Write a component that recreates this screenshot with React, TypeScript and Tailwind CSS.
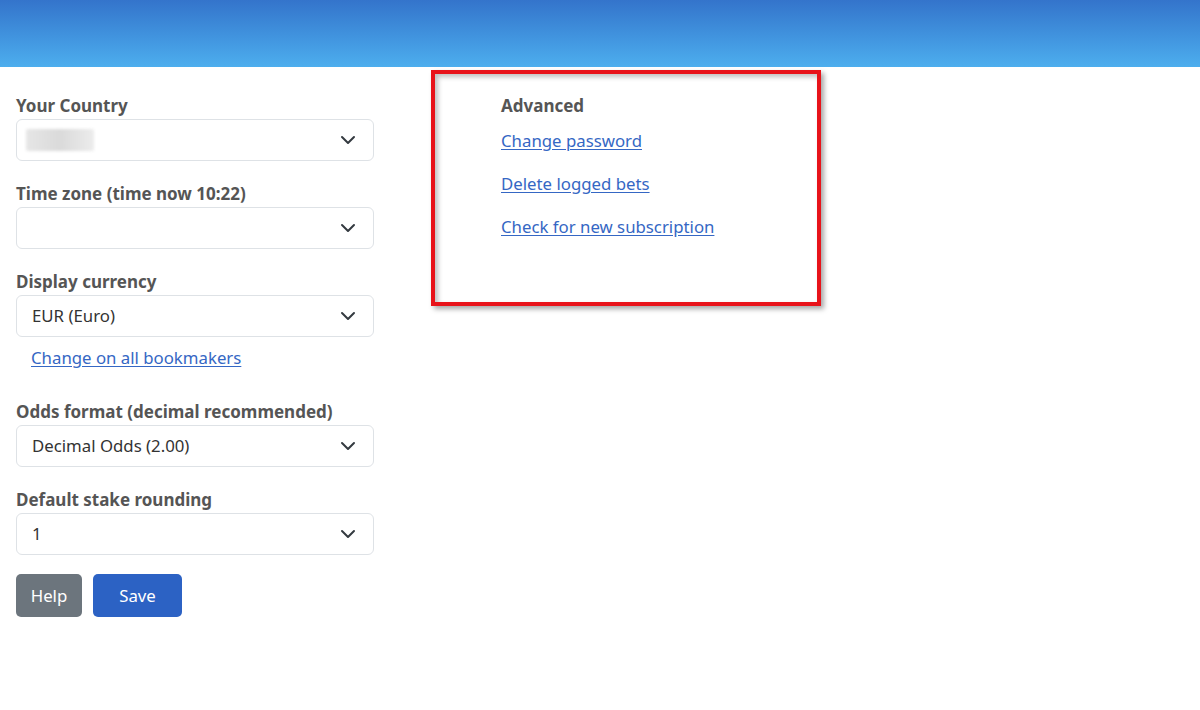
import React from "react";

function Chevron() {
  return (
    <svg width="16" height="16" viewBox="0 0 16 16" fill="none" className="shrink-0">
      <path d="M2 5l6 6 6-6" stroke="#343a40" strokeWidth="2" strokeLinecap="round" strokeLinejoin="round" />
    </svg>
  );
}

function SelectBox({ value, blurred }: { value?: string; blurred?: boolean }) {
  return (
    <div className="flex h-[42px] w-[358px] items-center justify-between rounded-[6px] border border-[#dee2e6] bg-white pl-[15px] pr-[17px] text-[16.8px] text-[#333]">
      {blurred ? (
        <div className="h-[22px] w-[68px] -ml-[6px] rounded-[2px] bg-gradient-to-r from-[#e6e6e6] via-[#dadada] to-[#ececec] blur-[1.5px]" />
      ) : (
        <span>{value}</span>
      )}
      <Chevron />
    </div>
  );
}

function Field({ label, children }: { label: string; children: React.ReactNode }) {
  return (
    <div className="flex flex-col">
      <label className="mb-[2px] text-[17px] font-bold leading-[23px] text-[#555]">{label}</label>
      {children}
    </div>
  );
}

const link = "text-[16.8px] leading-[22px] text-[#3567c4] underline underline-offset-2";

export default function App() {
  return (
    <div className="h-[710px] w-[1200px] bg-white" style={{ fontFamily: '"Noto Sans", "Open Sans", sans-serif' }}>
      <header className="h-[67px] w-full bg-gradient-to-b from-[#3474cb] to-[#4daeee]" />
      <main className="flex items-start">
        <div className="ml-[16px] mt-[27px] flex w-[358px] flex-col">
          <Field label="Your Country">
            <SelectBox blurred />
          </Field>
          <div className="mt-[21px]">
            <Field label="Time zone (time now 10:22)">
              <SelectBox />
            </Field>
          </div>
          <div className="mt-[21px]">
            <Field label="Display currency">
              <SelectBox value="EUR (Euro)" />
            </Field>
          </div>
          <a href="#" className={`ml-[15px] mt-[10px] ${link}`}>
            Change on all bookmakers
          </a>
          <div className="mt-[31px]">
            <Field label="Odds format (decimal recommended)">
              <SelectBox value="Decimal Odds (2.00)" />
            </Field>
          </div>
          <div className="mt-[21px]">
            <Field label="Default stake rounding">
              <SelectBox value="1" />
            </Field>
          </div>
          <div className="mt-[19px] flex gap-[11px]">
            <button className="h-[43px] w-[66px] rounded-[5px] bg-[#6c757d] text-[16.8px] text-white">Help</button>
            <button className="h-[43px] w-[89px] rounded-[5px] bg-[#2c62c4] text-[16.8px] text-white">Save</button>
          </div>
        </div>
        <section className="ml-[57px] mt-[3px] h-[236px] w-[390px] border-[4px] border-[#e8131a] pl-[66px] pt-[21px] shadow-[3px_3px_5px_rgba(0,0,0,0.35),inset_3px_3px_5px_rgba(0,0,0,0.25)]">
          <h3 className="text-[17px] font-bold leading-[22px] text-[#555]">Advanced</h3>
          <div className="mt-[13px] flex flex-col items-start gap-[21px]">
            <a href="#" className={link}>Change password</a>
            <a href="#" className={link}>Delete logged bets</a>
            <a href="#" className={link}>Check for new subscription</a>
          </div>
        </section>
      </main>
    </div>
  );
}
